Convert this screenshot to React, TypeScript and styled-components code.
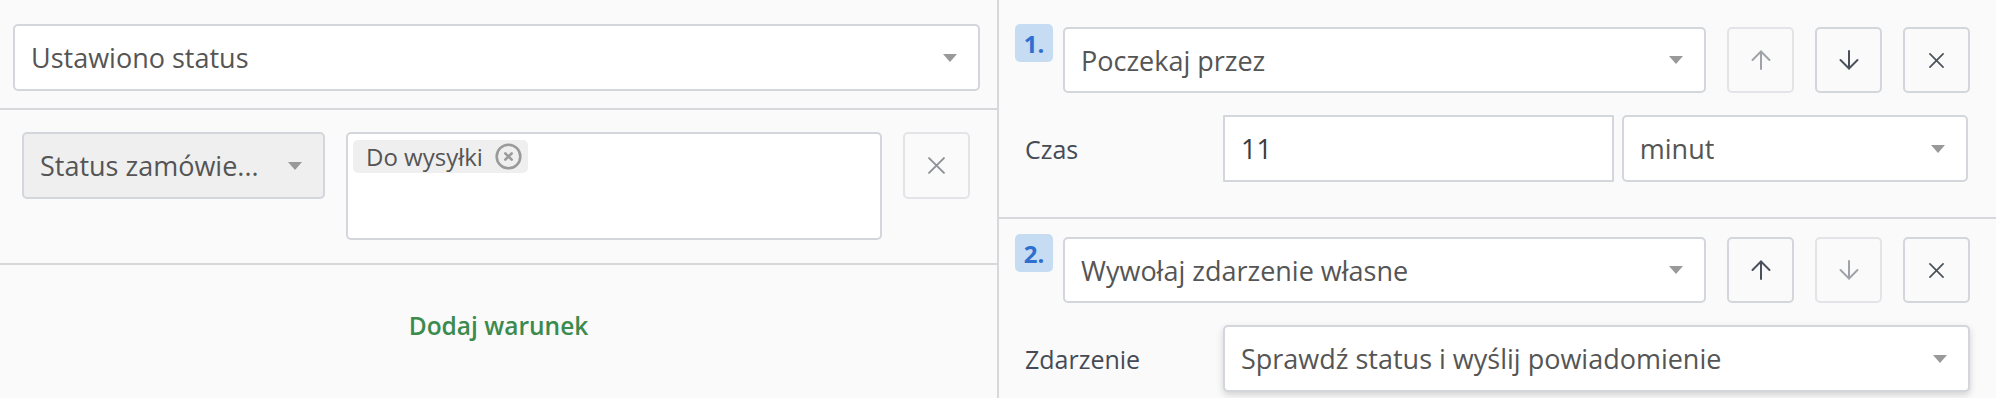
import React from "react";
import styled, { createGlobalStyle } from "styled-components";

const GlobalStyle = createGlobalStyle`
  html, body { margin: 0; padding: 0; background: #fafafa; }
  body { font-family: "Open Sans", "Noto Sans", sans-serif; color: #555; }
  * { box-sizing: border-box; }
`;

const LINE = "#d6d8dc";
const FIELD_BORDER = "#d3d6db";

const Page = styled.div`
  display: grid;
  grid-template-columns: 999px 1fr;
  width: 1996px;
  height: 398px;
  overflow: hidden;
  background: #fafafa;
`;

const LeftPanel = styled.section`
  display: flex;
  flex-direction: column;
  border-right: 2px solid ${LINE};
`;

const TriggerSection = styled.div`
  padding: 24px 17px 17px 13px;
  border-bottom: 2px solid ${LINE};
`;

const ConditionRow = styled.div`
  display: flex;
  align-items: flex-start;
  gap: 21px;
  padding: 22px 27px 23px 22px;
  border-bottom: 2px solid ${LINE};
`;

const AddSection = styled.div`
  display: flex;
  justify-content: center;
  padding-top: 42px;
`;

const AddLink = styled.a`
  font-size: 24.5px;
  font-weight: 600;
  color: #3b8a4e;
  line-height: 38px;
  text-decoration: none;
  cursor: pointer;
`;

const Select = styled.div<{ $muted?: boolean; $raised?: boolean; $width?: number; $height?: number }>`
  display: flex;
  align-items: center;
  justify-content: space-between;
  flex: ${(p) => (p.$width ? `0 0 ${p.$width}px` : "1 1 0")};
  min-width: 0;
  height: ${(p) => p.$height ?? 67}px;
  padding: 0 21px 0 16px;
  border: 2px solid ${FIELD_BORDER};
  border-radius: 5px;
  background: ${(p) => (p.$muted ? "#efefef" : "#fff")};
  box-shadow: ${(p) => (p.$raised ? "0 3px 7px rgba(0, 0, 0, 0.16)" : "none")};
  font-size: 27px;
  color: #555;
  white-space: nowrap;
`;

const SelectValue = styled.span`
  overflow: hidden;
  text-overflow: ellipsis;
`;

const Caret = styled.span`
  flex: 0 0 auto;
  width: 0;
  height: 0;
  margin-left: 16px;
  border-left: 7.5px solid transparent;
  border-right: 7.5px solid transparent;
  border-top: 8px solid #999;
`;

const MultiBox = styled.div`
  flex: 1 1 0;
  height: 108px;
  padding: 6px 5px;
  border: 2px solid ${FIELD_BORDER};
  border-radius: 5px;
  background: #fff;
  display: flex;
  align-items: flex-start;
`;

const Tag = styled.span`
  display: inline-flex;
  align-items: center;
  gap: 12px;
  height: 33px;
  padding: 0 6px 0 13px;
  border-radius: 5px;
  background: #efefef;
  font-size: 24px;
  color: #555;
`;

const IconButton = styled.button<{ $disabled?: boolean; $soft?: boolean }>`
  flex: 0 0 67px;
  width: 67px;
  height: ${(p) => (p.$soft ? 67 : 66)}px;
  margin-top: ${(p) => (p.$soft ? 0 : 3)}px;
  padding: 0;
  display: flex;
  align-items: center;
  justify-content: center;
  background: transparent;
  border: 2px solid ${(p) => (p.$disabled || p.$soft ? "#e2e4e7" : FIELD_BORDER)};
  border-radius: 5px;
  color: ${(p) => (p.$soft ? "#8d9197" : p.$disabled ? "#9fa3a9" : "#4b515a")};
  cursor: ${(p) => (p.$disabled ? "default" : "pointer")};
`;

const RightPanel = styled.section`
  display: flex;
  flex-direction: column;
`;

const Step = styled.div<{ $first?: boolean }>`
  padding: ${(p) => (p.$first ? "24px 26px 35px 16px" : "15px 26px 0 16px")};
  border-top: ${(p) => (p.$first ? "none" : `2px solid ${LINE}`)};
`;

const StepHeader = styled.div`
  display: flex;
  align-items: flex-start;
  gap: 21px;
`;

const BadgeAndSelect = styled.div`
  flex: 1 1 0;
  display: flex;
  align-items: flex-start;
  gap: 10px;
  min-width: 0;
`;

const SelectSlot = styled.div`
  flex: 1 1 0;
  display: flex;
  margin-top: 3px;
  min-width: 0;
`;

const Badge = styled.span`
  flex: 0 0 38px;
  width: 38px;
  height: 38px;
  border-radius: 5px;
  background: #c6dcf3;
  color: #2e6fd0;
  font-size: 24px;
  font-weight: 700;
  display: flex;
  align-items: center;
  justify-content: center;
`;

const FieldRow = styled.div`
  display: flex;
  align-items: center;
  margin-top: 22px;
`;

const FieldLabel = styled.label`
  flex: 0 0 208px;
  padding-left: 10px;
  font-size: 25px;
  color: #454b55;
`;

const FieldControls = styled.div<{ $pair?: boolean }>`
  flex: 1 1 0;
  display: flex;
  gap: 8px;
  padding-right: ${(p) => (p.$pair ? 2 : 0)}px;
  min-width: 0;
`;

const TextInput = styled.input`
  flex: 373 1 0;
  min-width: 0;
  height: 67px;
  padding: 0 16px;
  border: 2px solid ${FIELD_BORDER};
  border-radius: 1px;
  background: #fff;
  font-family: inherit;
  font-size: 27px;
  color: #3d3d3d;
  outline: none;
`;

const SelectWrap = styled.div<{ $grow: number }>`
  flex: ${(p) => p.$grow} 1 0;
  display: flex;
  min-width: 0;
`;

const ArrowUp = () => (
  <svg width="20" height="20" viewBox="0 0 20 20" fill="none" stroke="currentColor" strokeWidth="2" strokeLinecap="round" strokeLinejoin="round">
    <path d="M10 19V1.5" />
    <path d="M1.5 10L10 1.5L18.5 10" />
  </svg>
);

const ArrowDown = () => (
  <svg width="20" height="20" viewBox="0 0 20 20" fill="none" stroke="currentColor" strokeWidth="2" strokeLinecap="round" strokeLinejoin="round">
    <path d="M10 1V18.5" />
    <path d="M1.5 10L10 18.5L18.5 10" />
  </svg>
);

const Cross = ({ size = 16 }: { size?: number }) => (
  <svg width={size} height={size} viewBox="0 0 16 16" fill="none" stroke="currentColor" strokeWidth="1.8" strokeLinecap="round">
    <path d="M1 1L15 15" />
    <path d="M15 1L1 15" />
  </svg>
);

const CircleCross = () => (
  <svg width="27" height="27" viewBox="0 0 27 27" fill="none" stroke="#9a9a9a" strokeLinecap="round">
    <circle cx="13.5" cy="13.5" r="11.8" strokeWidth="2.6" />
    <path d="M10.3 10.3L16.7 16.7M16.7 10.3L10.3 16.7" strokeWidth="2.6" />
  </svg>
);

const SelectBox = ({ value, muted, raised, width }: { value: string; muted?: boolean; raised?: boolean; width?: number }) => (
  <Select $muted={muted} $raised={raised} $width={width}>
    <SelectValue>{value}</SelectValue>
    <Caret />
  </Select>
);

export default function App() {
  return (
    <>
      <GlobalStyle />
      <Page>
        <LeftPanel>
          <TriggerSection>
            <SelectBox value="Ustawiono status" />
          </TriggerSection>
          <ConditionRow>
            <SelectBox value="Status zamówie..." muted width={303} />
            <MultiBox>
              <Tag>
                Do wysyłki
                <CircleCross />
              </Tag>
            </MultiBox>
            <IconButton $soft aria-label="Usuń warunek">
              <Cross size={17} />
            </IconButton>
          </ConditionRow>
          <AddSection>
            <AddLink>Dodaj warunek</AddLink>
          </AddSection>
        </LeftPanel>

        <RightPanel>
          <Step $first>
            <StepHeader>
              <BadgeAndSelect>
                <Badge>1.</Badge>
                <SelectSlot>
                  <Select $height={66}>
                    <SelectValue>Poczekaj przez</SelectValue>
                    <Caret />
                  </Select>
                </SelectSlot>
              </BadgeAndSelect>
              <IconButton $disabled aria-label="W górę">
                <ArrowUp />
              </IconButton>
              <IconButton aria-label="W dół">
                <ArrowDown />
              </IconButton>
              <IconButton aria-label="Usuń">
                <Cross size={15} />
              </IconButton>
            </StepHeader>
            <FieldRow>
              <FieldLabel>Czas</FieldLabel>
              <FieldControls $pair>
                <TextInput defaultValue="11" />
                <SelectWrap $grow={364}>
                  <SelectBox value="minut" />
                </SelectWrap>
              </FieldControls>
            </FieldRow>
          </Step>

          <Step>
            <StepHeader>
              <BadgeAndSelect>
                <Badge>2.</Badge>
                <SelectSlot>
                  <Select $height={66}>
                    <SelectValue>Wywołaj zdarzenie własne</SelectValue>
                    <Caret />
                  </Select>
                </SelectSlot>
              </BadgeAndSelect>
              <IconButton aria-label="W górę">
                <ArrowUp />
              </IconButton>
              <IconButton $disabled aria-label="W dół">
                <ArrowDown />
              </IconButton>
              <IconButton aria-label="Usuń">
                <Cross size={15} />
              </IconButton>
            </StepHeader>
            <FieldRow>
              <FieldLabel>Zdarzenie</FieldLabel>
              <FieldControls>
                <SelectBox value="Sprawdź status i wyślij powiadomienie" raised />
              </FieldControls>
            </FieldRow>
          </Step>
        </RightPanel>
      </Page>
    </>
  );
}
